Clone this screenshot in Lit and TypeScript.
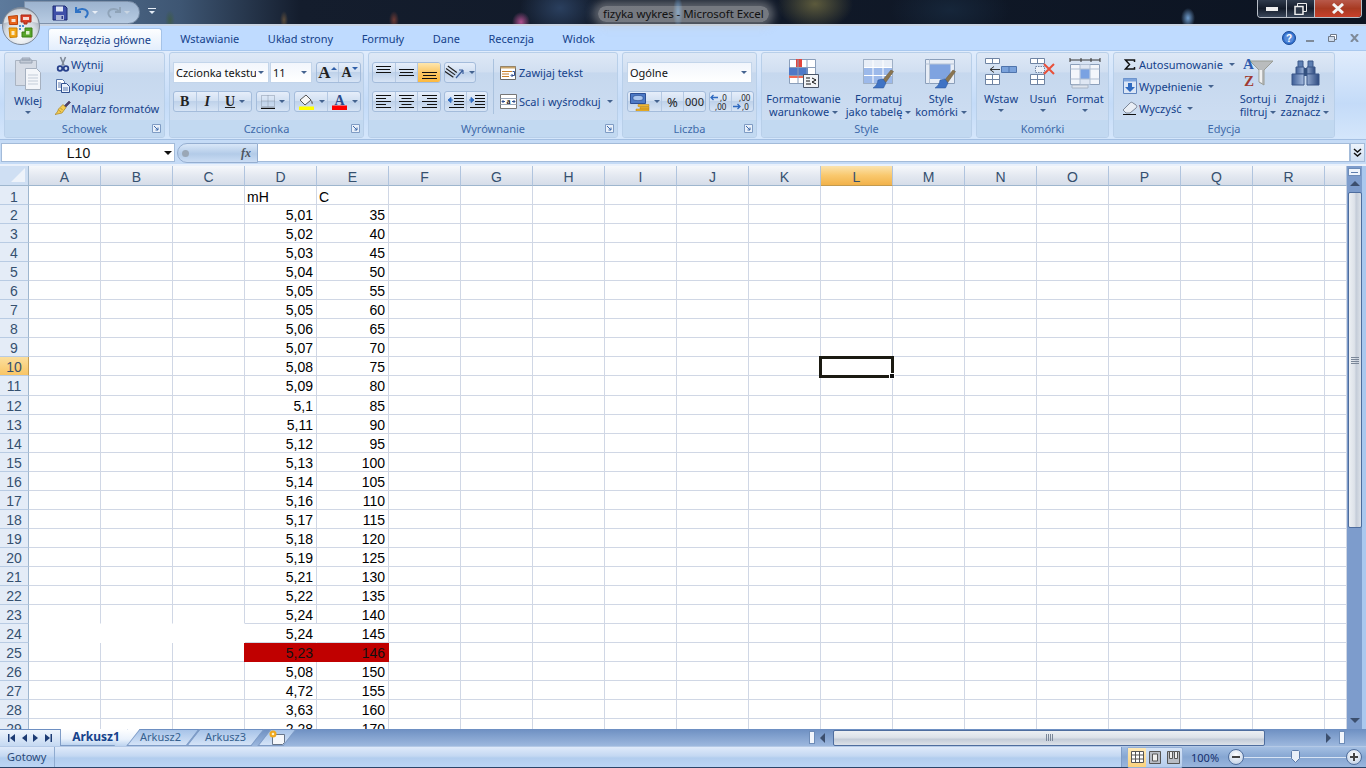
import { LitElement, html, svg, css } from 'lit';
import { customElement } from 'lit/decorators.js';

const COLS = ['A', 'B', 'C', 'D', 'E', 'F', 'G', 'H', 'I', 'J', 'K', 'L', 'M', 'N', 'O', 'P', 'Q', 'R', ''];
const MH = ['5,01', '5,02', '5,03', '5,04', '5,05', '5,05', '5,06', '5,07', '5,08', '5,09', '5,1', '5,11', '5,12', '5,13', '5,14', '5,16', '5,17', '5,18', '5,19', '5,21', '5,22', '5,24', '5,24', '5,23', '5,08', '4,72', '3,63', '2,28'];
const C = ['35', '40', '45', '50', '55', '60', '65', '70', '75', '80', '85', '90', '95', '100', '105', '110', '115', '120', '125', '130', '135', '140', '145', '146', '150', '155', '160', '170'];

const caret = html`<span class="caret"></span>`;
const launcher = html`<svg class="launch" width="9" height="9" viewBox="0 0 9 9"><path d="M.5 .5h8v8h-8z" fill="#e8f0fa" stroke="#7f9cc4"/><path d="M2 2l4 4M6 3.500V6H3.500" fill="none" stroke="#3e6aaa"/></svg>`;

const officeLogo = html`<svg width="40" height="40" viewBox="0 0 40 40">
  <defs>
    <radialGradient id="orb" cx=".5" cy=".75" r=".7"><stop offset="0" stop-color="#fff"/><stop offset=".6" stop-color="#d5dbe2"/><stop offset="1" stop-color="#8c97a5"/></radialGradient>
  </defs>
  <circle cx="20" cy="20" r="18.500" fill="url(#orb)" stroke="#7d8897"/>
  <path d="M3 17a17 14 0 0 1 34 0a30 12 0 0 0-34 0z" fill="#fff" opacity=".55"/>
  <path d="M7.500 10.500l9-1v9h-8z" fill="#e8641b" stroke="#b8430c"/><path d="M10.500 13h4v3h-4z" fill="#f6e3d2"/>
  <path d="M20 9h10v7h-4v2h-3v-2h-3z" fill="#d9402a" stroke="#a82a16"/><path d="M22 11h6v3h-6z" fill="#f6d9d2"/>
  <path d="M8 22h8v9l-7 .5z" fill="#f3a616" stroke="#c97f05"/><path d="M10.500 25h3v4h-3z" fill="#fbeac5"/>
  <path d="M24 22h7v9H21v-5h3z" fill="#58a52a" stroke="#3a7f14"/><path d="M25 25h3.500v3.500H25z" fill="#dff0cf"/>
  <path d="M18 19h2v2h-2zM21 19h2v2h-2zM18 22h2v2h-2z" fill="#4c8fd3"/>
</svg>`;

const saveIcon = html`<svg width="16" height="16" viewBox="0 0 16 16"><path d="M1 1h12l2 2v12H1z" fill="#3f4fa8" stroke="#1d2a70"/><path d="M4 1.500h7v5H4z" fill="#dfe6f4"/><path d="M4 10h8v5H4z" fill="#aab4d6"/><path d="M9.500 11h1.500v3H9.500z" fill="#2c3a8c"/></svg>`;
const undoIcon = html`<svg width="14" height="13" viewBox="0 0 14 13"><path d="M1 1v5h5M1.800 5.500C4 2.500 10 2 12 5c1.300 2.200.3 5-2 6.500" fill="none" stroke="#2f72c4" stroke-width="2.200"/></svg>`;
const redoIcon = html`<svg width="14" height="13" viewBox="0 0 14 13"><path d="M13 1v5H8M12.200 5.500C10 2.500 4 2 2 5c-1.300 2.200-.3 5 2 6.500" fill="none" stroke="#8fa3b8" stroke-width="2"/></svg>`;

const pasteIcon = html`<svg width="28" height="36" viewBox="0 0 28 36">
  <path d="M1.500 3.500h21v25h-21z" fill="#d5dbe5" stroke="#aab4c2"/>
  <path d="M8 3h8V1h-8zM6 3h12v3H6z" fill="#c2cad6" stroke="#98a3b3"/>
  <path d="M11.500 11.500h11l4 4v17h-15z" fill="#f4f6fa" stroke="#a6b1c0"/>
  <path d="M14 18h10M14 21h10M14 24h10M14 27h10" stroke="#c3ccd8"/>
</svg>`;
const cutIcon = html`<svg width="16" height="16" viewBox="0 0 16 16"><path d="M5.500 1l3.500 8.500M10.500 1L7 9.500" stroke="#7f8a99" stroke-width="1.600" fill="none"/><circle cx="5" cy="12.500" r="2.300" fill="none" stroke="#27408b" stroke-width="1.800"/><circle cx="11" cy="12.500" r="2.300" fill="none" stroke="#27408b" stroke-width="1.800"/></svg>`;
const copyIcon = html`<svg width="16" height="16" viewBox="0 0 16 16"><path d="M1.500 1.500h6l2 2v9h-8z" fill="#fff" stroke="#5574a8"/><path d="M6.500 5.500h5l3 3v6h-8z" fill="#eaf1fb" stroke="#2f4f8f"/><path d="M3 5h3M3 7h3M3 9h3M8 10h5M8 12h5" stroke="#5d7bb0"/></svg>`;
const brushIcon = html`<svg width="17" height="16" viewBox="0 0 17 16"><path d="M10 6l5-5 1.500 1.500-5 5z" fill="#4a3f6b" stroke="#332a52" stroke-width=".5"/><path d="M9 4.500l3 3L8 13l-7 1.500c2-1.500 2.800-3.500 3.500-5.500z" fill="#f3cb52" stroke="#a98220" stroke-width=".7"/><path d="M4.500 10l2.500 2M6.500 8l2 2" stroke="#a98220" stroke-width=".7"/></svg>`;

const lines = (kind: 'top' | 'mid' | 'bot') => {
  const y = kind === 'top' ? 0 : kind === 'mid' ? 3 : 6;
  return html`<svg width="15" height="13" viewBox="0 0 15 13"><path d="M0 ${y + .5}h15M1 ${y + 3.500}h13M0 ${y + 6.500}h15" stroke="#111"/></svg>`;
};
const alignIcon = (kind: 'l' | 'c' | 'r') => {
  const s = (w: number) => (kind === 'l' ? 0 : kind === 'c' ? (15 - w) / 2 : 15 - w);
  const d = [[15, 1.500], [10, 4.500], [15, 7.500], [10, 10.500], [15, 13.500]].map(([w, y]) => `M${s(w)} ${y}h${w}`).join('');
  return html`<svg width="15" height="15" viewBox="0 0 15 15"><path d="${d}" stroke="#111"/></svg>`;
};
const orientIcon = html`<svg width="20" height="15" viewBox="0 0 20 15"><g transform="rotate(35 6 7)"><path d="M0 4h11M0 7h11M0 10h11" stroke="#222" stroke-width="1.200"/></g><path d="M11 13L18 5M18 5l-4 0M18 5v4" stroke="#3c5f9c" fill="none" stroke-width="1.200"/></svg>`;
const indentL = html`<svg width="17" height="15" viewBox="0 0 17 15"><path d="M7 1.500h10M7 4.500h10M7 7.500h10M7 10.500h10M2 13.500h15" stroke="#111"/><path d="M6 6H2M4 3.500L1 6l3 2.500z" stroke="#2f6ac0" fill="#2f6ac0"/></svg>`;
const indentR = html`<svg width="17" height="15" viewBox="0 0 17 15"><path d="M7 1.500h10M7 4.500h10M7 7.500h10M7 10.500h10M2 13.500h15" stroke="#111"/><path d="M1 6h4M3 3.500L6 6 3 8.500z" stroke="#2f6ac0" fill="#2f6ac0"/></svg>`;
const wrapIcon = html`<svg width="17" height="15" viewBox="0 0 17 15"><path d="M.5 1.500h15v13H.5z" fill="#fff" stroke="#666"/><path d="M.5 1.500h15v2H.5z" fill="#c9a46a"/><path d="M2 6.500h10M2 9h7M2 11.500h7" stroke="#c77f2a"/><path d="M12.500 6.500h2v4h-3M12.500 9l-1.500 1.500 1.500 1.500" fill="none" stroke="#2f4f8f"/></svg>`;
const mergeIcon = html`<svg width="17" height="15" viewBox="0 0 17 15"><path d="M.5 .5h16v14H.5z" fill="#fff" stroke="#777"/><path d="M.5 4.500h16M.5 10.500h16" stroke="#9aa7b8"/><path d="M2 7.500h3M12 7.500h3M3.500 6l-1.500 1.500L3.500 9M13.500 6l1.500 1.500L13.500 9" fill="none" stroke="#2f4f8f"/><text x="8.500" y="10" font-size="8" font-weight="700" text-anchor="middle" font-family="Liberation Serif" fill="#222">a</text></svg>`;
const moneyIcon = html`<svg width="20" height="18" viewBox="0 0 20 18"><path d="M.5 .5h15v10H.5z" fill="#4c79c6" stroke="#2c4f94"/><path d="M3 3.500c2-1.500 8-1.500 10 0v3c-2 1.500-8 1.500-10 0z" fill="#a9c5ee" stroke="#24468a" stroke-width=".6"/><path d="M8 11.500h11v2H8zM10 14h9v2h-9zM6 16h13v2H6z" fill="#f1b72d" stroke="#b98310" stroke-width=".5"/></svg>`;
const incDec = (dir: 'inc' | 'dec') => html`<svg width="21" height="18" viewBox="0 0 21 18">
  <path d="${dir === 'inc' ? 'M1 4.500h7M3.500 2L1 4.500 3.500 7' : 'M1 13.500h7M5.500 11l2.500 2.500L5.500 16'}" fill="none" stroke="#2f6ac0" stroke-width="1.300"/>
  <text x="${dir === 'inc' ? 10 : 7}" y="8" font-size="8" font-family="Noto Sans" fill="#222">${dir === 'inc' ? ',0' : ',00'}</text>
  <text x="${dir === 'inc' ? 5 : 10}" y="17" font-size="8" font-family="Noto Sans" fill="#222">${dir === 'inc' ? ',00' : ',0'}</text>
</svg>`;
const borderIcon = html`<svg width="14" height="14" viewBox="0 0 14 14"><path d="M.5 .5h13v11H.5zM7 .5v11M.5 6h13" fill="none" stroke="#8896a8" stroke-dasharray="1 1"/><path d="M0 13.500h14" stroke="#111" stroke-width="1.300"/></svg>`;
const fillIcon = html`<svg width="17" height="17" viewBox="0 0 17 17"><path d="M2 7l6-5 5 5-6 5z" fill="#f7f7f7" stroke="#555"/><path d="M13 7c2 2 2.500 3 1.500 4s-1.500-2-1.500-4z" fill="#777"/><path d="M1 13.500h15V17H1z" fill="#ffff00"/></svg>`;
const colorA = html`<svg width="17" height="17" viewBox="0 0 17 17"><text x="8.500" y="11.500" font-size="14" font-weight="700" text-anchor="middle" font-family="Liberation Serif" fill="#2a4a8a">A</text><path d="M1 12.500h15V17H1z" fill="#ff0000"/></svg>`;

// fragments that go inside an <svg> need the svg tag or they land in the html namespace
const brushBig = svg`<path d="M19 22l9-11 2.500 1.500-8.500 12z" fill="#8a7550" stroke="#6a5838" stroke-width=".5"/><path d="M15 21l5-1 3 4-2.500 5H10c3-2 4.500-4.500 5-8z" fill="#3f73c4" stroke="#2b5297" stroke-width=".5"/>`;
const condIcon = html`<svg width="30" height="30" viewBox="0 0 30 30">
  <g transform="translate(0 1)"><path d="M.5 .5h26v24H.5z" fill="#fff" stroke="#8b9fba"/><path d="M7 0h6v8H7z" fill="#e4453a"/><path d="M0 8h19v8H0z" fill="#4e79c7"/><path d="M0 16h19v3H0z" fill="#f06a52"/><path d="M9 .5v24M18 .5v24M.5 8.500h26M.5 16.500h26" stroke="#8b9fba" fill="none"/></g>
  <path d="M14.500 16.500h15v13h-15z" fill="#f2f4f7" stroke="#4a5568"/><path d="M17 20h4M17 23h4M17 26h5M23 20l4 2-4 2 4 2" fill="none" stroke="#111"/>
</svg>`;
const tableIcon = html`<svg width="32" height="32" viewBox="0 0 32 32"><g transform="translate(0 2)"><path d="M.5 .5h29v24H.5z" fill="#e8eef7" stroke="#9fb0c6"/><path d="M1 8.500h28v16H1z" fill="#9cb9ea"/><path d="M10 .5v24M20 .5v24M.5 8.500h29M.5 16.500h29" stroke="#fff"/><path d="M.5 .5h29v24H.5z" fill="none" stroke="#9fb0c6"/>${brushBig}</g></svg>`;
const cellStyleIcon = html`<svg width="32" height="32" viewBox="0 0 32 32"><g transform="translate(0 2)"><path d="M.5 .5h29v24H.5z" fill="#e7edf6" stroke="#8b9fba"/><path d="M4.500 5h21v15h-21z" fill="#7fa3e0"/><path d="M.5 5h29M4.500 .5v24" stroke="#b5c3d6"/>${brushBig}</g></svg>`;
const insertIcon = html`<svg width="32" height="30" viewBox="0 0 32 30"><path d="M.5 .5h14v5H.5zM7.500 .5v5" fill="#fff" stroke="#6f84a3"/><path d="M.5 16.500h14v10H.5zM.5 21.500h14M7.500 16.500v10" fill="#fff" stroke="#6f84a3"/><path d="M16.500 8.500h15v6h-15zM24 8.500v6" fill="#7aa2db" stroke="#4f74ac"/><path d="M5 11.500h10M9 8.500l-4 3 4 3" fill="none" stroke="#333"/></svg>`;
const deleteIcon = html`<svg width="26" height="30" viewBox="0 0 26 30"><path d="M.5 .5h14v5H.5zM7.500 .5v5" fill="#fff" stroke="#6f84a3"/><path d="M.5 16.500h14v10H.5zM.5 21.500h14M7.500 16.500v10" fill="#fff" stroke="#6f84a3"/><path d="M5.500 8.500h9v6h-9z" fill="#eef2f8" stroke="#6f84a3" stroke-dasharray="1.500 1"/><path d="M14 6l10 10M24 6L14 16" stroke="#e8503a" stroke-width="2"/></svg>`;
const formatIcon = html`<svg width="32" height="32" viewBox="0 0 32 32"><path d="M1 3h30M1 1v4M31 1v4M12 1v4M22 1v4" stroke="#333"/><path d="M1.500 7.500h29v20H1.500z" fill="#f3f6fb" stroke="#8b9fba"/><path d="M11 7.500h10v20H11z" fill="#dfe7f3" stroke="#b0bfd3"/><path d="M11.500 12h9v10h-9z" fill="#7aa2e2"/><path d="M1.500 12h29M1.500 22h29" stroke="#b0bfd3"/><path d="M3 28h16v3H3z" fill="#dfe5ee" stroke="#aab6c6"/></svg>`;
const sumIcon = html`<svg width="12" height="11" viewBox="0 0 12 11"><path d="M10.500 3V1H1.500l4 4.500-4 4.500h9V8" fill="none" stroke="#111" stroke-width="1.500"/></svg>`;
const fillDownIcon = html`<svg width="14" height="16" viewBox="0 0 14 16"><path d="M.5 .5h13v15H.5z" fill="#dbe6f6" stroke="#5d83bd"/><path d="M.5 .5h13v3H.5z" fill="#7ea5dd"/><path d="M5 5h4v4h3l-5 5-5-5h3z" fill="#2f6ac0"/></svg>`;
const eraserIcon = html`<svg width="16" height="14" viewBox="0 0 16 14"><path d="M1 9l7-7c1-1 2-1 3 0l3 2c1 1 1 2 0 3l-6 5H4z" fill="#e9eef5" stroke="#7c8798"/><path d="M1 13.500h13" stroke="#111"/></svg>`;
const sortIcon = html`<svg width="30" height="34" viewBox="0 0 30 34">
  <path d="M7 5h23l-9 9v15l-5-3V14z" fill="#b9bcbd" stroke="#9a9d96"/>
  <path d="M16.500 14h2.500v13l-2.500-1.500z" fill="#f0f0f0"/>
  <text x="0" y="13" font-size="15" font-weight="700" font-family="Liberation Serif" fill="#2d5cae">A</text>
  <text x="1" y="30" font-size="15" font-weight="700" font-family="Liberation Serif" fill="#a03a32">Z</text>
</svg>`;
const binocIcon = html`<svg width="29" height="26" viewBox="0 0 29 26">
  <defs><linearGradient id="bin" x1="0" x2="1" y1="0" y2="0"><stop offset="0" stop-color="#3d5d96"/><stop offset=".45" stop-color="#a7bde0"/><stop offset="1" stop-color="#2d4a80"/></linearGradient></defs>
  <path d="M7 1h5v7H7zM17 1h5v7h-5z" fill="#5c7eb2" stroke="#3b5688"/>
  <path d="M5 7h8v7H5zM16 7h8v7h-8z" fill="url(#bin)" stroke="#3b5688"/>
  <path d="M13 8h3v8h-3z" fill="#33507f"/>
  <path d="M1 14h12v11H1zM16 14h12v11H16z" fill="url(#bin)" stroke="#3b5688"/>
</svg>`;
const newSheetIcon = html`<svg width="18" height="15" viewBox="0 0 18 15"><path d="M4.500 4.500h12v8l-2 2h-10z" fill="#f5f7fa" stroke="#66758a"/><circle cx="5" cy="4" r="3.500" fill="#f0a81e"/><circle cx="5" cy="4" r="1.300" fill="#fff3c8"/></svg>`;
const navFirst = html`<svg width="7" height="8" viewBox="0 0 7 8"><path d="M0 0h1.500v8H0zM7 0v8L2 4z" fill="#1c3a73"/></svg>`;
const navPrev = html`<svg width="5" height="8" viewBox="0 0 5 8"><path d="M5 0v8L0 4z" fill="#1c3a73"/></svg>`;
const navNext = html`<svg width="5" height="8" viewBox="0 0 5 8"><path d="M0 0v8l5-4z" fill="#1c3a73"/></svg>`;
const navLast = html`<svg width="7" height="8" viewBox="0 0 7 8"><path d="M0 0v8l5-4zM5.500 0H7v8H5.500z" fill="#1c3a73"/></svg>`;

@customElement('app-root')
export class AppRoot extends LitElement {
  static styles = css`
    :host {
      display: block;
      position: relative;
      width: 1366px;
      height: 768px;
      overflow: hidden;
      font-family: "Noto Sans", sans-serif;
      font-size: 11px;
      color: #15428b;
      background: #bfdbff;
    }
    .app { display: flex; flex-direction: column; height: 768px; }

    /* title bar with the blurred desktop behind it */
    .title {
      height: 24px;
      flex: none;
      display: flex;
      justify-content: flex-end;
      border-bottom: 2px solid #c8d3e2;
      background:
        radial-gradient(ellipse 7px 10px at 1188px 18px, #6f9ccc, transparent),
        radial-gradient(ellipse 9px 10px at 521px 22px, #b0508f, transparent),
        radial-gradient(ellipse 5px 16px at 678px 12px, #3c7fc0, transparent),
        radial-gradient(ellipse 38px 26px at 815px 4px, #5c5a3c, transparent),
        radial-gradient(ellipse 5px 9px at 394px 20px, #6e3a34, transparent),
        radial-gradient(ellipse 4px 9px at 284px 20px, #5c4c3a, transparent),
        radial-gradient(ellipse 5px 10px at 170px 20px, #3e5a4c, transparent),
        radial-gradient(ellipse 40px 30px at 560px 8px, #2a3f5e, transparent),
        radial-gradient(ellipse 60px 30px at 950px 10px, #16263a, transparent),
        linear-gradient(90deg, #5d7a9c 0, #3e5673 180px, #141d2d 300px, #0c1422 100%);
      box-sizing: content-box;
    }
    .caption {
      position: absolute;
      left: 598px;
      top: 6px;
      padding: 0 5px;
      height: 16px;
      line-height: 16px;
      color: #111;
      font-size: 11.500px;
      white-space: nowrap;
      background: rgba(200, 200, 200, .55);
      box-shadow: 0 0 8px 5px rgba(200, 200, 200, .42);
      border-radius: 8px;
      letter-spacing: -.05px;
    }
    .winbtns {
      display: flex;
      height: 18px;
      margin-right: 4px;
      border: 1px solid #b9bfc8;
      border-top: none;
      border-radius: 0 0 4px 4px;
      box-sizing: border-box;
      overflow: hidden;
    }
    .winbtns div { display: flex; align-items: center; justify-content: center; border-right: 1px solid #b9bfc8; background: linear-gradient(#2f3a4c, #141c2a 50%, #39465a); }
    .winbtns .w-min { width: 28px; }
    .winbtns .w-max { width: 27px; }
    .winbtns .w-close { width: 46px; border: none; background: linear-gradient(#b8594a, #a83a22 50%, #c8402a); }

    .qat {
      position: absolute;
      left: 24px;
      top: 1px;
      width: 116px;
      height: 23px;
      padding-left: 27px;
      box-sizing: border-box;
      display: flex;
      align-items: center;
      border: 1px solid #7f92ab;
      border-radius: 0 12px 12px 0;
      background: linear-gradient(#9cb3cf, #b7cbe2);
    }
    .qat .caret { border-top-color: #e8eef6; }
    .qat .off { border-top-color: #c9d5e2; }
    .qat svg:nth-of-type(1) { margin-right: 7px; }
    .qat svg:nth-of-type(2), .qat svg:nth-of-type(3) { margin-right: 3px; }
    .qat .caret:not(.off) { margin-right: 9px; }
    .qat-more { position: absolute; left: 148px; top: 8px; width: 8px; }
    .qat-more i { display: block; height: 1px; background: #e6edf6; margin-bottom: 2px; }
    .qat-more .caret { display: block; border-top-color: #e6edf6; margin-left: 1px; }
    .orb { position: absolute; left: 1px; top: 6px; width: 40px; height: 40px; }

    /* tabs */
    .tabs { height: 24px; flex: none; display: flex; align-items: flex-end; padding-left: 48px; background: #bfdbff; position: relative; }
    .tab { padding: 0 14.300px; line-height: 22px; white-space: nowrap; }
    .tab.on {
      padding: 0 10px;
      margin-right: 4px;
      line-height: 21px;
      background: linear-gradient(#fdfeff, #e3eefc);
      border: 1px solid #a5c3e8;
      border-bottom: none;
      border-radius: 3px 3px 0 0;
      color: #15428b;
    }
    .tabs-right { position: absolute; right: 0; top: 0; height: 24px; display: flex; align-items: center; }
    .tabs-right svg { display: block; }

    /* ribbon */
    .ribbon {
      height: 90px;
      flex: none;
      box-sizing: border-box;
      display: flex;
      gap: 4px;
      padding: 1px 0 0 4px;
      background: linear-gradient(#e0ecfc, #c4dbf8 60%, #d4e6fb);
      border-top: 1px solid #a9c8ee;
      border-bottom: 1px solid #a3bfe2;
    }
    .group {
      height: 86px;
      flex: none;
      box-sizing: border-box;
      display: flex;
      flex-direction: column;
      border: 1px solid #b8cfe9;
      border-radius: 3px;
      background: linear-gradient(#dee8f6, #d1dff1 22%, #c6d8ee 24%, #cfdff3);
    }
    .g-clip { width: 161px; }
    .g-font { width: 195px; }
    .g-align { width: 250px; }
    .g-num { width: 135px; }
    .g-style { width: 211px; }
    .g-cells { width: 133px; }
    .g-edit { width: 222px; }
    .body { height: 67px; flex: none; display: flex; box-sizing: border-box; }
    .glabel {
      flex: 1;
      position: relative;
      text-align: center;
      line-height: 17px;
      color: #3e6aaa;
      background: #c2d9f1;
      border-radius: 0 0 2px 2px;
    }
    .launch { position: absolute; right: 3px; top: 4px; }
    .caret {
      display: inline-block;
      width: 0;
      height: 0;
      border: 3px solid transparent;
      border-bottom: none;
      border-top-color: #44638f;
      flex: none;
    }
    .small-col { display: flex; flex-direction: column; }
    .srow { height: 22px; display: flex; align-items: center; white-space: nowrap; }
    .srow .si { width: 17px; display: flex; justify-content: center; flex: none; }
    .srow .caret { margin-left: 6px; }
    .big { display: flex; flex-direction: column; align-items: center; flex: none; }
    .big .ic { height: 39px; display: flex; align-items: center; justify-content: center; }
    .big .t { line-height: 13px; white-space: nowrap; text-align: center; }
    .big .caret { vertical-align: 2px; }
    .big .solo { display: block; margin: 4px auto 0; }
    .paste { width: 36px; margin: 0 8px 0 5px; }

    .rows { display: flex; flex-direction: column; gap: 8px; padding-top: 9px; }
    .rows > div { display: flex; height: 21px; }
    .field {
      box-sizing: border-box;
      height: 21px;
      display: flex;
      align-items: center;
      justify-content: space-between;
      padding: 0 4px 0 2px;
      background: linear-gradient(#f2f6fc, #fff);
      border: 1px solid #c3d5ea;
      color: #111;
      white-space: nowrap;
      overflow: hidden;
    }
    .clip { width: 80px; overflow: hidden; }
    .seg {
      box-sizing: border-box;
      height: 21px;
      display: flex;
      border: 1px solid #a4bcdb;
      border-radius: 3px;
      background: linear-gradient(#e6eefa, #d2e0f2 45%, #bfd2ea 50%, #d7e4f5);
      overflow: hidden;
      flex: none;
    }
    .seg .b { display: flex; align-items: center; justify-content: center; gap: 4px; border-right: 1px solid #b5c9e3; color: #222; flex: 1; }
    .seg .b:last-child { border-right: none; }
    .seg .hot { background: linear-gradient(#fde6ae, #fbc765 50%, #fdb93f); }
    .letter { font-family: "Liberation Serif", serif; font-size: 14px; line-height: 14px; color: #222; }
    .ml4 { margin-left: 4px; }
    .ml3 { margin-left: 3px; }
    .ml1 { margin-left: 1px; }
    .sep { width: 1px; height: 55px; margin: 6px 6px 0 5px; background: #aac2de; flex: none; }
    .with-icon { align-items: center; white-space: nowrap; gap: 2px; }
    .with-icon svg { flex: none; }
    .with-icon .caret { margin-left: 4px; }
    .wide { width: 125px; }

    /* formula bar */
    .fbar {
      height: 26px;
      flex: none;
      box-sizing: border-box;
      padding: 3px 1px 0;
      display: flex;
      background: #c5dbf6;
      border-bottom: 2px solid #eaf1fb;
    }
    .namebox {
      width: 174px;
      height: 19px;
      box-sizing: border-box;
      position: relative;
      text-align: center;
      padding-right: 19px;
      font: 14px/18px "Liberation Sans", sans-serif;
      color: #111;
      background: #fff;
      border: 1px solid #a3bbd9;
    }
    .namebox .caret { position: absolute; right: 2px; top: 7px; border-width: 4px 4px 0; border-top-color: #111; }
    .fxpill {
      width: 81px;
      height: 20px;
      margin-left: 2px;
      box-sizing: border-box;
      display: flex;
      align-items: center;
      justify-content: space-between;
      padding: 0 6px 0 4px;
      border: 1px solid #95aed0;
      border-radius: 10px 0 0 10px;
      background: linear-gradient(#d9e7f8, #b3cbe8 55%, #cadcf3);
      font: italic 700 12px "Liberation Serif", serif;
      color: #4d5560;
    }
    .fxpill i { width: 7px; height: 7px; border-radius: 50%; background: #9aa7b6; display: block; }
    .finput { width: 1092px; height: 19px; box-sizing: border-box; background: #fff; border: 1px solid #a3bbd9; border-left: none; }
    .fexp {
      width: 15px;
      height: 19px;
      box-sizing: border-box;
      border: 1px solid #a3bbd9;
      background: linear-gradient(#eef4fc, #cfdff3);
      display: flex;
      align-items: center;
      justify-content: center;
    }

    /* sheet */
    .sheetwrap { flex: 1; display: flex; min-height: 0; }
    .sheet {
      flex: 1;
      min-width: 0;
      position: relative;
      overflow: hidden;
      display: grid;
      grid-template-columns: 29px repeat(18, 72px) 22px;
      grid-auto-rows: 19.050px;
      grid-template-rows: 20px;
      font: 14px "Liberation Sans", sans-serif;
      color: #000;
      background: #fff;
      align-content: start;
    }
    .corner { background: #cfdff3; border-right: 1px solid #9eb6ce; border-bottom: 1px solid #9eb6ce; position: relative; }
    .corner::after { content: ""; position: absolute; right: 3px; bottom: 3px; border: 7px solid transparent; border-right-color: #eef3fa; border-bottom-color: #eef3fa; }
    .ch {
      display: flex;
      align-items: center;
      justify-content: center;
      box-sizing: border-box;
      padding-top: 2px;
      color: #35506f;
      background: linear-gradient(#f6f8fb, #e4e9f1 50%, #d6dde9);
      border-right: 1px solid #b0c4de;
      border-bottom: 1px solid #9eb6ce;
    }
    .ch.sel { background: linear-gradient(#fbe3ae, #f9c86d 50%, #f2b24a); border-bottom-color: #c29a4f; color: #35506f; }
    .rh {
      display: flex;
      align-items: center;
      justify-content: center;
      box-sizing: border-box;
      padding-top: 2px;
      color: #35506f;
      background: #e4ecf7;
      border-right: 1px solid #9eb6ce;
      border-bottom: 1px solid #b8cbe3;
    }
    .rh.first { padding-top: 4px; }
    .rh.sel { background: linear-gradient(#fbdf9e, #f9c565); border-right-color: #c29a4f; }
    .cell {
      border-right: 1px solid #d0d7e5;
      border-bottom: 1px solid #d0d7e5;
      line-height: 20px;
      padding: 0 3px 0 2px;
      white-space: nowrap;
      overflow: hidden;
      min-width: 0;
    }
    .cell.first { padding-top: 1px; }
    .num { text-align: right; }
    .nob { border-bottom-color: transparent; }
    .nor { border-right-color: transparent; }
    .red { background: #c00000; border-color: #c00000; box-shadow: -1px 0 #c00000; color: #111; }
    .selbox { position: absolute; left: 819px; top: 190px; width: 75px; height: 22px; box-sizing: border-box; border: 3px solid #1b1a12; }
    .selbox::after { content: ""; position: absolute; right: -4px; bottom: -4px; width: 4px; height: 4px; background: #111; border: 1px solid #fff; }

    .vscroll { width: 19px; flex: none; display: flex; background: #aac8ee; }
    .vtrack { width: 15px; display: flex; flex-direction: column; align-items: center; background: #7d9ccc; padding-top: 2px; box-sizing: border-box; }
    .vsplit { width: 13px; height: 8px; flex: none; box-sizing: border-box; border: 1px solid #6d8cb8; background: #eef4fc; display: flex; align-items: center; justify-content: center; }
    .vsplit i { width: 7px; height: 1px; background: #5f7fae; display: block; }
    .tri-up { width: 0; height: 0; border: 5px solid transparent; border-top: none; border-bottom: 5px solid #3c4f6e; margin: 5px 0 6px; flex: none; }
    .tri-down { width: 0; height: 0; border: 5px solid transparent; border-bottom: none; border-top: 5px solid #3c4f6e; margin-bottom: 6px; flex: none; }
    .vthumb {
      width: 14px;
      height: 336px;
      flex: none;
      box-sizing: border-box;
      border: 1px solid #4e6d9e;
      border-radius: 2px;
      background: linear-gradient(90deg, #eceff3, #dde2e9 45%, #c4ccd8 60%, #dde2e9);
      display: flex;
      flex-direction: column;
      gap: 1px;
      align-items: center;
      justify-content: center;
    }
    .vthumb i { width: 8px; height: 1px; background: #7a8698; display: block; }
    .vfill { flex: 1; }

    /* sheet tabs + horizontal scroll */
    .sbar { height: 17px; flex: none; display: flex; background: linear-gradient(#6d8fc2, #9db8de); }
    .nav { width: 61px; flex: none; box-sizing: border-box; display: flex; align-items: center; justify-content: space-around; padding: 0 5px; background: linear-gradient(#eef4fc, #c5d9f2); border-top: 1px solid #6d8fc2; border-right: 1px solid #8aa8d0; }
    .stabs { display: flex; flex: none; width: 247px; padding-left: 1px; box-sizing: border-box; }
    .stab { position: relative; height: 17px; line-height: 16px; text-align: center; color: #35608f; z-index: 0; flex: none; }
    .stab::before {
      content: "";
      position: absolute;
      inset: 0;
      z-index: -1;
      transform: skewX(-38deg);
      border: 1px solid #7f9cc6;
      border-top-color: #6d8fc2;
      background: linear-gradient(#a7c3e8, #d4e3f7);
    }
    .stab.act { width: 64px; margin-left: 2px; font-weight: 700; color: #15428b; font-size: 12px; z-index: 1; }
    .stab.act::before { transform: none; left: -4px; background: linear-gradient(#fff, #eaf2fc 60%, #bcd3ef); border-top: none; }
    .stab.act::after { content: ""; position: absolute; top: 0; right: -6px; width: 12px; height: 17px; background: linear-gradient(#fff, #eaf2fc 60%, #bcd3ef); transform: skewX(-38deg); border-right: 1px solid #7f9cc6; z-index: -1; }
    .stab.two { width: 65px; }
    .stab.new { width: 26px; margin-left: 6px; display: flex; align-items: center; justify-content: center; }
    .hs { flex: 1; display: flex; align-items: center; min-width: 0; padding-left: 501px; }
    .split { width: 6px; height: 13px; box-sizing: border-box; background: #f2f6fc; border: 1px solid #6d8cb8; flex: none; }
    .split.r { margin-left: 8px; }
    .tri-l { width: 0; height: 0; border: 5px solid transparent; border-left: none; border-right: 5px solid #3c4f6e; flex: none; margin-left: 5px; }
    .tri-r { width: 0; height: 0; border: 5px solid transparent; border-right: none; border-left: 5px solid #3c4f6e; flex: none; }
    .hthumb {
      width: 432px;
      height: 16px;
      flex: none;
      margin: 0 61px 0 8px;
      box-sizing: border-box;
      border: 1px solid #4e6d9e;
      border-radius: 2px;
      background: linear-gradient(#eceff3, #dde2e9 45%, #c4ccd8 60%, #dde2e9);
      display: flex;
      gap: 1px;
      align-items: center;
      justify-content: center;
    }
    .hthumb i { width: 1px; height: 7px; background: #7a8698; display: block; }

    /* status bar */
    .status {
      height: 22px;
      flex: none;
      box-sizing: border-box;
      display: flex;
      align-items: center;
      border-top: 1px solid #b4c9e6;
      border-bottom: 1px solid #2c4468;
      background: linear-gradient(#dfeafa, #c4d8f2 45%, #b2cdee 55%, #bcd5f4);
    }
    .ready { width: 55px; box-sizing: border-box; padding-left: 7px; line-height: 20px; border-right: 1px solid #8fabd0; color: #2a4a7a; height: 100%; }
    .status-fill { flex: 1; }
    .st-right {
      width: 245px;
      height: 100%;
      box-sizing: border-box;
      display: flex;
      align-items: center;
      padding-left: 5px;
      border-left: 1px solid #7f9cc6;
      background: linear-gradient(#a4bfe3, #86a6d2 50%, #9ab6dd);
    }
    .views { display: flex; height: 19px; border: 1px solid #94afd6; border-radius: 2px; background: linear-gradient(#d5e3f6, #b6cdec); }
    .views span { width: 18px; display: flex; align-items: center; justify-content: center; }
    .views .hot { background: linear-gradient(#fde9b8, #fbd27c); }
    .zoomtxt { margin: 0 9px 0 8px; color: #15306e; font-size: 11px; }
    .zbtn {
      width: 16px;
      height: 16px;
      flex: none;
      box-sizing: border-box;
      border-radius: 50%;
      border: 1px solid #506e9c;
      background: radial-gradient(circle at 50% 35%, #fff, #b7c9e2);
      color: #333;
      display: flex;
      align-items: center;
      justify-content: center;
    }
    .zbtn i { display: block; width: 8px; height: 2px; background: #444; position: relative; }
    .zbtn.plus i::after { content: ""; position: absolute; left: 3px; top: -3px; width: 2px; height: 8px; background: #444; }
    .slider { width: 102px; height: 16px; flex: none; display: flex; align-items: center; justify-content: center; background: linear-gradient(#d8e4f4, #d8e4f4) center / 100% 1px no-repeat; }
  `;

  private _group(cls: string, label: string, body: unknown, launch = true) {
    return html`<div class="group ${cls}">
      <div class="body">${body}</div>
      <div class="glabel">${label}${launch ? launcher : ''}</div>
    </div>`;
  }

  private _srow(icon: unknown, text: string, arrow = false) {
    return html`<div class="srow"><span class="si">${icon}</span><span>${text}</span>${arrow ? caret : ''}</div>`;
  }

  private _big(icon: unknown, width: number, l1: string, l2?: string) {
    return html`<div class="big" style="width:${width}px">
      <div class="ic">${icon}</div>
      <div class="t">${l1}</div>
      ${l2 ? html`<div class="t">${l2} ${caret}</div>` : html`<span class="caret solo"></span>`}
    </div>`;
  }

  private _titlebar() {
    return html`<div class="title">
      <div class="winbtns">
        <div class="w-min"><svg width="12" height="4" viewBox="0 0 12 4"><path d="M0 0h12v4H0z" fill="#eee"/></svg></div>
        <div class="w-max"><svg width="13" height="12" viewBox="0 0 13 12"><path d="M3.500 .5h9v8h-9z" fill="none" stroke="#eee"/><path d="M1 3.500h8v8H1z" fill="#2a3444" stroke="#eee" stroke-width="1.500"/></svg></div>
        <div class="w-close"><svg width="14" height="11" viewBox="0 0 14 11"><path d="M2 1l10 9M12 1L2 10" stroke="#f4f4f4" stroke-width="3"/></svg></div>
      </div>
    </div>`;
  }

  private _tabs() {
    const names = ['Wstawianie', 'Układ strony', 'Formuły', 'Dane', 'Recenzja', 'Widok'];
    return html`<div class="tabs">
      <div class="tab on">Narzędzia główne</div>
      ${names.map(n => html`<div class="tab">${n}</div>`)}
      <div class="tabs-right">
        <svg width="14" height="14" viewBox="0 0 14 14" style="margin-right:10px"><circle cx="7" cy="7" r="6.500" fill="#2f6fd0" stroke="#1c4a94"/><circle cx="7" cy="7" r="4.800" fill="#fff" opacity=".2"/><text x="7" y="10.500" font-size="10" font-weight="700" text-anchor="middle" font-family="Liberation Sans" fill="#fff">?</text></svg>
        <svg width="8" height="3" viewBox="0 0 8 3" style="margin:6px 14px 0 0"><path d="M0 0h8v2H0z" fill="#7f8a99"/></svg>
        <svg width="9" height="8" viewBox="0 0 9 8" style="margin-right:13px"><path d="M2.500 .5h6v5h-6z" fill="#fff" stroke="#6f7a8a"/><path d="M.5 2.500h6v5h-6z" fill="#d0dcec" stroke="#6f7a8a"/></svg>
        <svg width="9" height="8" viewBox="0 0 9 8" style="margin-right:7px"><path d="M1 0l7 8M8 0L1 8" stroke="#7f8a99" stroke-width="2"/></svg>
      </div>
    </div>`;
  }

  private _ribbon() {
    return html`<div class="ribbon">
      ${this._group('g-clip', 'Schowek', html`
        <div class="big paste"><div class="ic" style="padding-top:2px">${pasteIcon}</div><div class="t">Wklej</div><span class="caret solo"></span></div>
        <div class="small-col">
          ${this._srow(cutIcon, 'Wytnij')}
          ${this._srow(copyIcon, 'Kopiuj')}
          ${this._srow(brushIcon, 'Malarz formatów')}
        </div>`)}

      ${this._group('g-font', 'Czcionka', html`
        <div class="rows" style="padding-left:3px">
          <div>
            <div class="field" style="width:96px"><span class="clip">Czcionka tekstu</span>${caret}</div>
            <div class="field ml1" style="width:42px"><span>11</span>${caret}</div>
            <div class="seg ml4" style="width:45px">
              <div class="b"><span class="letter" style="font-size:17px;font-weight:700">A</span><span class="caret" style="transform:rotate(180deg);margin:-8px 0 0 -4px;border-top-color:#2f5ea8"></span></div>
              <div class="b"><span class="letter" style="font-weight:700">A</span><span class="caret" style="margin:-8px 0 0 -4px;border-top-color:#2f5ea8"></span></div>
            </div>
          </div>
          <div>
            <div class="seg" style="width:79px">
              <div class="b"><span class="letter" style="font-weight:700">B</span></div>
              <div class="b"><span class="letter" style="font-style:italic;font-weight:700">I</span></div>
              <div class="b" style="flex:none;width:32px"><span class="letter" style="text-decoration:underline;font-weight:700">U</span>${caret}</div>
            </div>
            <div class="seg ml4" style="width:34px"><div class="b">${borderIcon}${caret}</div></div>
            <div class="seg ml4" style="width:67px">
              <div class="b">${fillIcon}${caret}</div>
              <div class="b">${colorA}${caret}</div>
            </div>
          </div>
        </div>`)}

      ${this._group('g-align', 'Wyrównanie', html`
        <div class="rows" style="padding-left:3px;width:116px">
          <div>
            <div class="seg" style="width:69px">
              <div class="b">${lines('top')}</div><div class="b">${lines('mid')}</div><div class="b hot">${lines('bot')}</div>
            </div>
            <div class="seg ml3" style="width:32px"><div class="b">${orientIcon}${caret}</div></div>
          </div>
          <div>
            <div class="seg" style="width:69px">
              <div class="b">${alignIcon('l')}</div><div class="b">${alignIcon('c')}</div><div class="b">${alignIcon('r')}</div>
            </div>
            <div class="seg ml3" style="width:44px"><div class="b">${indentL}</div><div class="b">${indentR}</div></div>
          </div>
        </div>
        <div class="sep"></div>
        <div class="rows">
          <div class="with-icon">${wrapIcon}<span>Zawijaj tekst</span></div>
          <div class="with-icon">${mergeIcon}<span>Scal i wyśrodkuj</span>${caret}</div>
        </div>`)}

      ${this._group('g-num', 'Liczba', html`
        <div class="rows" style="padding-left:4px">
          <div><div class="field wide"><span>Ogólne</span>${caret}</div></div>
          <div>
            <div class="seg" style="width:79px">
              <div class="b" style="flex:none;width:33px">${moneyIcon}${caret}</div>
              <div class="b"><span style="font-size:13px">%</span></div>
              <div class="b"><span>000</span></div>
            </div>
            <div class="seg ml3" style="width:45px"><div class="b">${incDec('inc')}</div><div class="b">${incDec('dec')}</div></div>
          </div>
        </div>`)}

      ${this._group('g-style', 'Style', html`
        <div style="display:flex;padding-left:3px">
          ${this._big(condIcon, 77, 'Formatowanie', 'warunkowe')}
          <div style="width:3px"></div>
          ${this._big(tableIcon, 67, 'Formatuj', 'jako tabelę')}
          <div style="width:4px"></div>
          ${this._big(cellStyleIcon, 50, 'Style', 'komórki')}
        </div>`, false)}

      ${this._group('g-cells', 'Komórki', html`
        <div style="display:flex;padding-left:3px">
          ${this._big(insertIcon, 42, 'Wstaw')}
          ${this._big(deleteIcon, 42, 'Usuń')}
          ${this._big(formatIcon, 42, 'Format')}
        </div>`, false)}

      ${this._group('g-edit', 'Edycja', html`
        <div class="small-col" style="width:115px;padding-left:7px">
          <div class="srow"><span class="si" style="width:18px">${sumIcon}</span><span>Autosumowanie</span>${caret}</div>
          <div class="srow"><span class="si" style="width:18px">${fillDownIcon}</span><span>Wypełnienie</span>${caret}</div>
          <div class="srow"><span class="si" style="width:18px">${eraserIcon}</span><span>Wyczyść</span>${caret}</div>
        </div>
        ${this._big(sortIcon, 44, 'Sortuj i', 'filtruj')}
        <div style="width:2px"></div>
        ${this._big(binocIcon, 46, 'Znajdź i', 'zaznacz')}`, false)}
    </div>`;
  }

  private _formula() {
    return html`<div class="fbar">
      <div class="namebox">L10<span class="caret"></span></div>
      <div class="fxpill"><i></i><span>fx</span></div>
      <div class="finput"></div>
      <div class="fexp"><svg width="9" height="10" viewBox="0 0 9 10"><path d="M1 1l3.500 3L8 1M1 5l3.500 3L8 5" fill="none" stroke="#111" stroke-width="1.500"/></svg></div>
    </div>`;
  }

  private _cellClass(row: number, col: number) {
    const out: string[] = ['cell'];
    if (row === 1) out.push('first');
    if (row === 25 && col >= 3 && col <= 4) out.push('red');
    // a pale patch hides the gridlines round rows 23-25 in A:C
    if (col < 3 && (row === 23 || row === 24)) out.push('nob');
    if (col < 3 && row === 24) out.push('nor');
    if (col === 3 && row === 24) out.push('nor');
    if (col === 2 && row === 25) out.push('nor');
    return out.join(' ');
  }

  private _sheet() {
    const rows = Array.from({ length: 29 }, (_, i) => i + 1);
    return html`<div class="sheetwrap">
      <div class="sheet">
        <div class="corner"></div>
        ${COLS.map(c => html`<div class="ch ${c === 'L' ? 'sel' : ''}">${c}</div>`)}
        ${rows.map(r => html`
          <div class="rh ${r === 10 ? 'sel' : ''} ${r === 1 ? 'first' : ''}">${r}</div>
          ${COLS.map((_, c) => {
            let text = '';
            let cls = '';
            if (r === 1 && c === 3) text = 'mH';
            if (r === 1 && c === 4) text = 'C';
            if (r > 1 && c === 3) { text = MH[r - 2]; cls = 'num'; }
            if (r > 1 && c === 4) { text = C[r - 2]; cls = 'num'; }
            return html`<div class="${this._cellClass(r, c)} ${cls}">${text}</div>`;
          })}
        `)}
        <div class="selbox"></div>
      </div>
      <div class="vscroll">
        <div class="vtrack">
          <div class="vsplit"><i></i></div>
          <div class="tri-up"></div>
          <div class="vthumb"><i></i><i></i><i></i><i></i></div>
          <div class="vfill"></div>
          <div class="tri-down"></div>
        </div>
      </div>
    </div>`;
  }

  private _sheetbar() {
    return html`<div class="sbar">
      <div class="nav">${navFirst}${navPrev}${navNext}${navLast}</div>
      <div class="stabs">
        <div class="stab act">Arkusz1</div>
        <div class="stab two">Arkusz2</div>
        <div class="stab two">Arkusz3</div>
        <div class="stab new">${newSheetIcon}</div>
      </div>
      <div class="hs">
        <div class="split"></div>
        <div class="tri-l"></div>
        <div class="hthumb"><i></i><i></i><i></i><i></i></div>
        <div class="tri-r"></div>
        <div class="split r"></div>
      </div>
    </div>`;
  }

  private _status() {
    return html`<div class="status">
      <div class="ready">Gotowy</div>
      <div class="status-fill"></div>
      <div class="st-right">
        <div class="views">
          <span class="hot"><svg width="13" height="12" viewBox="0 0 13 12"><path d="M.5 .5h12v11H.5zM4.500 .5v11M8.500 .5v11M.5 4h12M.5 8h12" fill="#fff" stroke="#555"/></svg></span>
          <span><svg width="12" height="13" viewBox="0 0 12 13"><path d="M.5 .5h11v12H.5z" fill="#b8bcc4" stroke="#555"/><path d="M3.500 3h5v7h-5z" fill="#eee" stroke="#555"/></svg></span>
          <span><svg width="13" height="13" viewBox="0 0 13 13"><path d="M.5 .5h12v12H.5z" fill="#b8bcc4" stroke="#555"/><path d="M2.500 .5h3v7h-3zM7.500 .5h3v7h-3z" fill="#eee" stroke="#555"/></svg></span>
        </div>
        <span class="zoomtxt">100%</span>
        <div class="zbtn"><i></i></div>
        <div class="slider">
          <svg width="9" height="14" viewBox="0 0 9 14"><path d="M.5 1.500l1-1h6l1 1v7l-4 4-4-4z" fill="#e9eff8" stroke="#5c7aa8"/></svg>
        </div>
        <div class="zbtn plus"><i></i></div>
      </div>
    </div>`;
  }

  render() {
    return html`<div class="app">
      ${this._titlebar()}
      ${this._tabs()}
      ${this._ribbon()}
      ${this._formula()}
      ${this._sheet()}
      ${this._sheetbar()}
      ${this._status()}
    </div>
    <div class="caption">fizyka wykres - Microsoft Excel</div>
    <div class="qat">
      ${saveIcon}${undoIcon}<span class="caret"></span>${redoIcon}<span class="caret off"></span>
    </div>
    <div class="qat-more"><i></i><span class="caret"></span></div>
    <div class="orb">${officeLogo}</div>`;
  }
}
